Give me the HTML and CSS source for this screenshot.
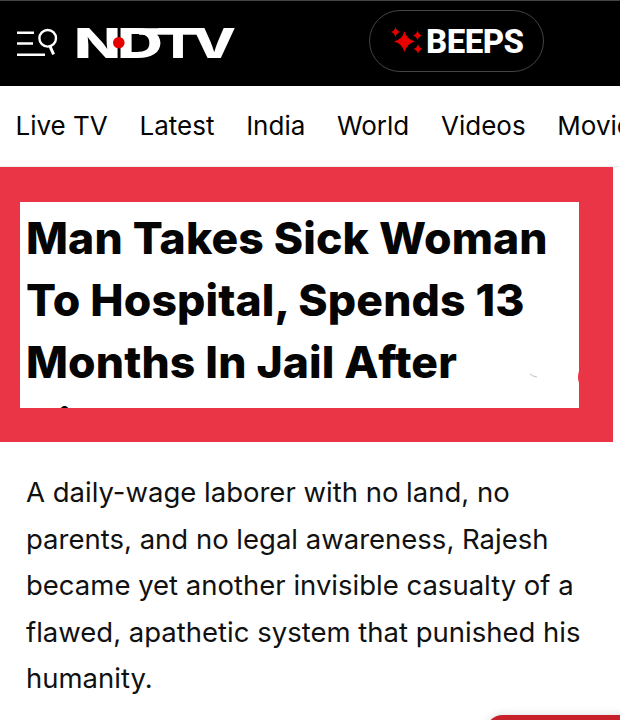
FILE: index.html
```html
<!DOCTYPE html>
<html lang="en">
<head>
  <meta charset="UTF-8">
  <title>NDTV</title>
  <link rel="stylesheet" href="styles.css">
</head>
<body>
  <header class="header">
    <svg class="menu-icon" width="42" height="30" viewBox="0 0 42 30" fill="none" stroke="#fff" stroke-width="2.4">
      <path d="M0 5.7h17M0 16.5h16M0 27.7h28"/>
      <circle cx="30.7" cy="11.3" r="8.3"/>
      <path d="M33 19.3l3.6 8" stroke-width="3"/>
    </svg>
    <svg class="logo" width="160" height="32" viewBox="0 0 160 32">
      <g class="logo-text">
        <text x="-3" y="31" textLength="47" lengthAdjust="spacingAndGlyphs">N</text>
        <text x="40" y="31" textLength="46" lengthAdjust="spacingAndGlyphs">D</text>
        <text class="logo-t" x="79" y="31" textLength="44" lengthAdjust="spacingAndGlyphs">T</text>
        <text x="115" y="31" textLength="44" lengthAdjust="spacingAndGlyphs">V</text>
      </g>
      <rect x="62" y="1.2" width="64" height="6.5" fill="#fff"/>
      <circle cx="41.8" cy="15.7" r="5.8" fill="#e60000"/>
    </svg>
    <a class="beeps">
      <svg width="32" height="28" viewBox="0 0 32 28" fill="#e60000">
        <path d="M13.5 4q2 8 10.5 10.5q-8.5 2.5-10.5 10.5q-2-8-10.5-10.5q8.5-2.5 10.5-10.5z"/>
        <path d="M4.5 0q1 4 4.5 5q-3.5 1-4.5 5q-1-4-4.5-5q3.5-1 4.5-5z"/>
        <path d="M26.5 3.5q1 4 4.5 5q-3.5 1-4.5 4.5q-1-3.5-4.5-4.5q3.5-1 4.5-5z"/>
        <path d="M27 17q1 4 4.5 5q-3.5 1-4.5 4.5q-1-3.5-4.5-4.5q3.5-1 4.5-5z"/>
      </svg>
      <span class="beeps-text">BEEPS</span>
    </a>
  </header>

  <nav class="nav">
    <a>Live TV</a>
    <a>Latest</a>
    <a>India</a>
    <a>World</a>
    <a>Videos</a>
    <a>Movies</a>
  </nav>

  <main>
    <div class="frame">
      <h1 class="headline">Man Takes Sick Woman<br>To Hospital, Spends 13<br>Months In Jail After<br>Di</h1>
      <svg class="mark" width="50" height="16" viewBox="0 0 50 16">
        <path d="M1 5l3 2l4 1" fill="none" stroke="#999" stroke-width=".6"/>
        <path d="M50 2q-2 6 0 12z" fill="#e93546"/>
      </svg>
    </div>
    <p class="summary">A daily-wage laborer with no land, no<br>parents, and no legal awareness, Rajesh<br>became yet another invisible casualty of a<br>flawed, apathetic system that punished his<br>humanity.</p>
  </main>

  <div class="bottom-bar"></div>
</body>
</html>
```

FILE: styles.css
```css
* {
  box-sizing: border-box;
}

body {
  margin: 0;
  height: 720px;
  overflow: hidden;
  background: #fff;
  color: #050505;
  font-family: Inter, Roboto, sans-serif;
}

.header {
  display: flex;
  align-items: flex-start;
  height: 86px;
  background: #000;
  border-top: 1px solid #444;
  padding-left: 17px;
}

.menu-icon {
  margin-top: 26px;
}

.logo {
  margin: 26px 0 0 18px;
  overflow: visible;
}

.logo-text {
  fill: #fff;
  font-size: 41px;
  font-weight: 800;
}

.logo-t {
  font-weight: 700;
}

.beeps {
  display: flex;
  align-items: center;
  width: 175px;
  height: 62px;
  margin: 9px 0 0 132px;
  padding-left: 21px;
  border: 1px solid #444;
  border-radius: 31px;
}

.beeps-text {
  margin-left: 3px;
  color: #fff;
  font-family: Roboto, sans-serif;
  font-size: 33px;
  font-weight: 800;
  letter-spacing: -0.5px;
}

.nav {
  display: flex;
  gap: 31.7px;
  height: 81px;
  padding: 24px 0 0 15.5px;
  overflow: hidden;
  font-size: 26px;
  line-height: 32px;
  white-space: nowrap;
  border-bottom: 1px solid #eee;
}

.frame {
  position: relative;
  width: 613px;
  height: 275px;
  background: #fff;
  border: solid #e93546;
  border-width: 35px 34px 34px 20px;
  overflow: hidden;
}

.headline {
  margin: 0;
  padding: 5px 0 0 6px;
  font-size: 44.5px;
  font-weight: 800;
  line-height: 62px;
  letter-spacing: 0.12px;
  white-space: nowrap;
}

/* small scribble beside the frame edge */
.mark {
  position: absolute;
  right: 0;
  bottom: 23px;
}

.summary {
  margin: 27px 0 0 26px;
  font-size: 27.5px;
  line-height: 46.6px;
  color: #111;
  white-space: nowrap;
}

.bottom-bar {
  position: fixed;
  top: 715px;
  left: 485px;
  right: -20px;
  height: 40px;
  background: #c8202a;
  border-radius: 18px;
  box-shadow: 0 0 8px rgba(0, 0, 0, .15);
}
```
